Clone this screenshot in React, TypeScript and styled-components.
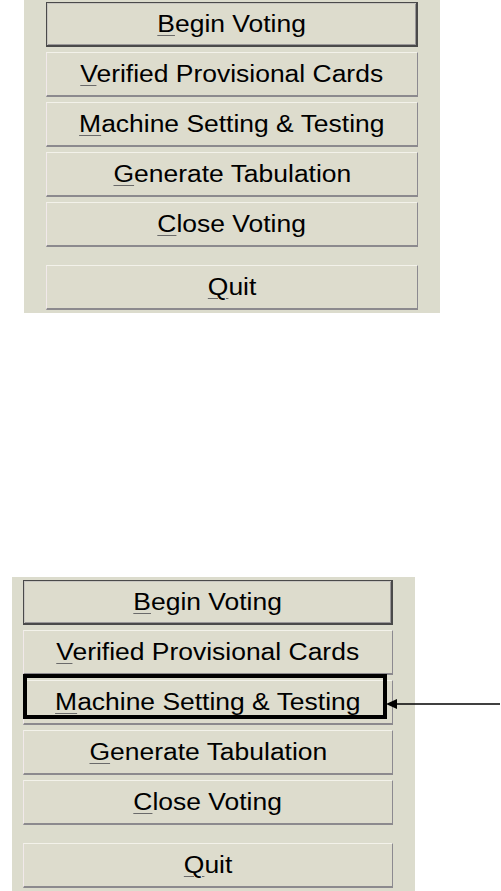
import React from "react";
import styled, { createGlobalStyle, css } from "styled-components";

const Global = createGlobalStyle`
  html, body { margin: 0; padding: 0; background: #ffffff; }
  body { font-family: "Liberation Sans", Arial, sans-serif; width: 501px; height: 891px; overflow: hidden; }
`;

const Page = styled.div`
  display: flex;
  flex-direction: column;
`;

const Panel = styled.div<{ $top: number; $left: number; $width: number; $height: number; $padTop: number; $padLeft: number; $btnWidth: number }>`
  margin-top: ${(p) => p.$top}px;
  margin-left: ${(p) => p.$left}px;
  width: ${(p) => p.$width}px;
  height: ${(p) => p.$height}px;
  box-sizing: border-box;
  padding-top: ${(p) => p.$padTop}px;
  padding-left: ${(p) => p.$padLeft}px;
  background: #dcdccd;
  display: flex;
  flex-direction: column;
  gap: 5px;
  --btn-w: ${(p) => p.$btnWidth}px;
`;

const Slot = styled.div<{ $spaced?: boolean }>`
  position: relative;
  margin-top: ${(p) => (p.$spaced ? 13 : 0)}px;
`;

const Button = styled.div<{ $default?: boolean }>`
  width: var(--btn-w);
  height: 45px;
  box-sizing: border-box;
  display: flex;
  align-items: center;
  justify-content: center;
  background: #dddccd;
  color: #000;
  font-size: 23px;
  font-family: "Liberation Sans", Arial, sans-serif;
  border-top: 1px solid #f3f2ea;
  border-left: 1px solid #f1e9ea;
  border-right: 1px solid #8c8a90;
  border-bottom: 2px solid #8c8a8e;
  ${(p) =>
    p.$default &&
    css`
      border: 1px solid #4a4a4a;
      border-bottom-width: 2px;
      border-right-width: 2px;
      box-shadow: inset 1px 1px 0 #c8c6c0, inset -1px -1px 0 #9a9898;
    `}
`;

const Label = styled.span`
  display: inline-block;
  transform: scaleX(1.15);
  padding-top: 1px;
`;

const Key = styled.span`
  text-decoration: underline;
  text-decoration-color: #6a6a6a;
  text-underline-offset: 3px;
  text-decoration-thickness: 1px;
`;

const Highlight = styled.div`
  position: absolute;
  left: 0;
  top: -6px;
  width: 364px;
  height: 45px;
  box-sizing: border-box;
  border: 4px solid #000;
  pointer-events: none;
`;

const Arrow = styled.svg`
  position: absolute;
  left: 337px;
  top: 14px;
  overflow: visible;
`;

type Item = { key: string; rest: string; isDefault?: boolean; spaced?: boolean };

const items: Item[] = [
  { key: "B", rest: "egin Voting", isDefault: true },
  { key: "V", rest: "erified Provisional Cards" },
  { key: "M", rest: "achine Setting & Testing" },
  { key: "G", rest: "enerate Tabulation" },
  { key: "C", rest: "lose Voting" },
  { key: "Q", rest: "uit", spaced: true },
];

function Menu({ callout }: { callout?: boolean }) {
  return (
    <>
      {items.map((it) => (
        <Slot key={it.key} $spaced={it.spaced}>
          <Button $default={it.isDefault}>
            <Label>
              <Key>{it.key}</Key>
              {it.rest}
            </Label>
          </Button>
          {callout && it.key === "M" && (
            <>
              <Highlight />
              <Arrow width="141" height="20" viewBox="0 0 141 20">
                <line x1="34" y1="10" x2="140" y2="10" stroke="#000" strokeWidth="1.3" />
                <polygon points="26,10 37,5 37,15" fill="#000" />
              </Arrow>
            </>
          )}
        </Slot>
      ))}
    </>
  );
}

export default function App() {
  return (
    <>
      <Global />
      <Page>
        <Panel $top={0} $left={24} $width={416} $height={313} $padTop={2} $padLeft={22} $btnWidth={372}>
          <Menu />
        </Panel>
        <Panel $top={264} $left={12} $width={403} $height={314} $padTop={3} $padLeft={11} $btnWidth={370}>
          <Menu callout />
        </Panel>
      </Page>
    </>
  );
}
